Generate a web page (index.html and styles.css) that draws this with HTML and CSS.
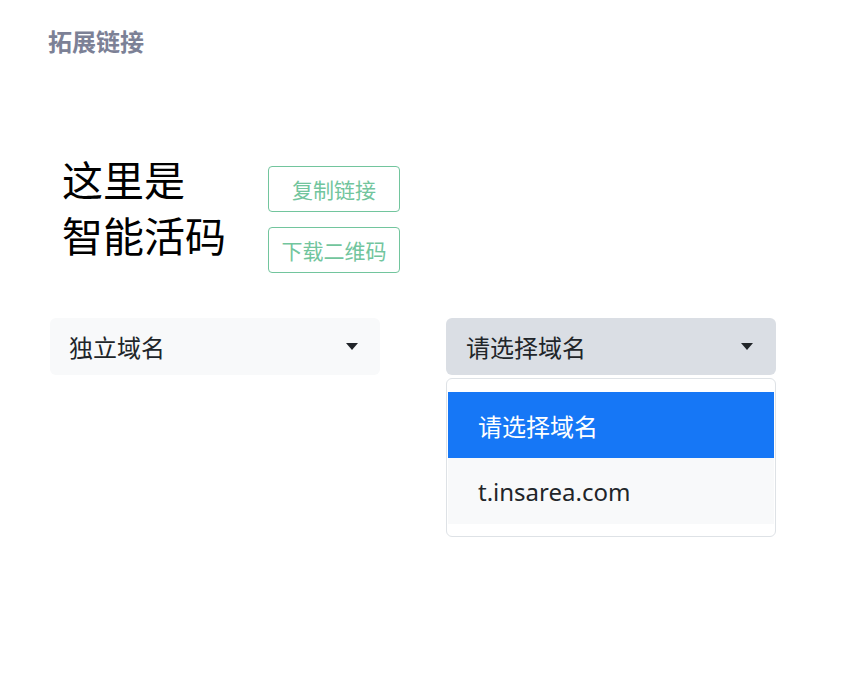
FILE: index.html
```html
<!DOCTYPE html>
<html lang="zh">
<head>
  <meta charset="UTF-8">
  <meta name="viewport" content="width=device-width, initial-scale=1.0">
  <title>拓展链接</title>
  <link rel="stylesheet" href="styles.css">
</head>
<body>
<div class="page">
  <h2 class="title">拓展链接</h2>

  <section class="hero">
    <div class="hero-text">
      <p>这里是</p>
      <p>智能活码</p>
    </div>
    <div class="hero-actions">
      <button class="btn-outline">复制链接</button>
      <button class="btn-outline">下载二维码</button>
    </div>
  </section>

  <section class="domains">
    <div class="select">
      <span>独立域名</span>
      <i class="caret"></i>
    </div>
    <div class="select-wrap">
      <div class="select open">
        <span>请选择域名</span>
        <i class="caret"></i>
      </div>
      <div class="options">
        <div class="option active">请选择域名</div>
        <div class="option">t.insarea.com</div>
      </div>
    </div>
  </section>
</div>
</body>
</html>
```

FILE: styles.css
```css
html, body {
  min-height: 100vh;
}

body {
  background-color: #ffffff;
  font-family: "Noto Sans", "Noto Sans CJK SC", sans-serif;
  margin: 0;
  padding: 0;
  color: #212529;
}

.page {
  min-height: 100vh;
  box-sizing: border-box;
  padding: 24px 50px 0 50px;
}

.title {
  margin: 0 0 0 -2px;
  font-size: 24px;
  line-height: 36px;
  font-weight: bold;
  color: #7c8196;
}

.hero {
  display: flex;
  margin-top: 92px;
  margin-left: 12px;
}

.hero-text p {
  margin: 0;
  font-size: 41px;
  line-height: 56px;
  color: #000000;
}

.hero-actions {
  display: flex;
  flex-direction: column;
  gap: 15px;
  margin-left: 42px;
  padding-top: 14px;
}

.btn-outline {
  width: 132px;
  height: 46px;
  background: #ffffff;
  border: 1px solid #72c59d;
  border-radius: 4px;
  color: #72c59d;
  font-family: inherit;
  font-size: 21px;
  padding: 0;
  cursor: pointer;
}

.domains {
  display: flex;
  align-items: flex-start;
  gap: 66px;
  margin-top: 45px;
}

.select {
  width: 330px;
  height: 57px;
  box-sizing: border-box;
  display: flex;
  align-items: center;
  justify-content: space-between;
  padding: 0 22px 0 19px;
  background-color: #f8f9fa;
  border-radius: 6px;
  font-size: 24px;
}

.select.open {
  background-color: #dadee4;
  padding-left: 20px;
  padding-right: 23px;
}

.caret {
  width: 0;
  height: 0;
  border-left: 6px solid transparent;
  border-right: 6px solid transparent;
  border-top: 7px solid #212529;
}

.select-wrap {
  position: relative;
  width: 330px;
}

.options {
  position: absolute;
  top: 60px;
  left: 0;
  z-index: 10;
  width: 330px;
  box-sizing: border-box;
  padding: 13px 1px 12px 1px;
  background: #ffffff;
  border: 1px solid #dee2e6;
  border-radius: 6px;
}

.option {
  height: 66px;
  display: flex;
  align-items: center;
  padding-left: 30px;
  background-color: #f8f9fa;
  font-size: 24px;
  color: #212529;
}

.option.active {
  background-color: #1677f6;
  color: #ffffff;
}
```
